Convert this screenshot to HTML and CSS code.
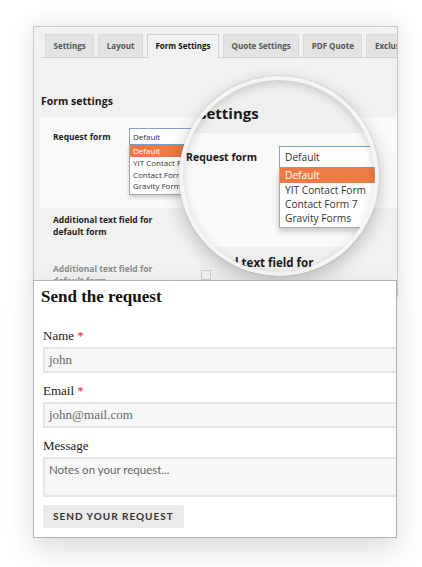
FILE: index.html
```html
<!DOCTYPE html>
<html>
<head>
<meta charset="utf-8">
<link rel="stylesheet" href="styles.css">
</head>
<body>
<div class="stage">
  <div class="admin">
    <div class="tabs">
      <div class="tab">Settings</div>
      <div class="tab">Layout</div>
      <div class="tab active">Form Settings</div>
      <div class="tab">Quote Settings</div>
      <div class="tab">PDF Quote</div>
      <div class="tab">Exclusions</div>
    </div>
    <h2 class="admin-title">Form settings</h2>
    <div class="row-light">
      <div class="label label-short">Request form</div>
      <div class="select-wrap">
        <div class="select">Default</div>
        <ul class="options">
          <li class="sel">Default</li>
          <li>YIT Contact Form</li>
          <li>Contact Form 7</li>
          <li>Gravity Forms</li>
        </ul>
      </div>
    </div>
    <div class="row">
      <div class="label label-long">Additional text field for default form</div>
    </div>
    <div class="row row-faded">
      <div class="label label-long">Additional text field for default form</div>
      <span class="checkbox"></span>
    </div>

    <div class="magnifier">
      <div class="lens-head"><h3 class="lens-title">Form settings</h3></div>
      <div class="lens-row">
        <div class="lens-label">Request form</div>
        <div class="lens-select-wrap">
          <div class="lens-select">Default</div>
          <ul class="lens-options">
            <li class="sel">Default</li>
            <li>YIT Contact Form</li>
            <li>Contact Form 7</li>
            <li>Gravity Forms</li>
          </ul>
        </div>
      </div>
      <div class="lens-row2">
        <div class="lens-label2">Additional text field for</div>
      </div>
    </div>
  </div>

  <div class="card">
    <h2 class="card-title">Send the request</h2>
    <div class="field first">
      <div class="field-label">Name <span class="req">*</span></div>
      <div class="input">john</div>
    </div>
    <div class="field">
      <div class="field-label">Email <span class="req">*</span></div>
      <div class="input">john@mail.com</div>
    </div>
    <div class="field">
      <div class="field-label">Message</div>
      <div class="textarea">Notes on your request...</div>
    </div>
    <div class="btn">SEND YOUR REQUEST</div>
  </div>
</div>
</body>
</html>
```
FILE: styles.css
```css
html, body {
  margin: 0;
  background: #fff;
}

.stage {
  width: 422px;
  height: 567px;
  box-sizing: border-box;
  padding: 26px 0 0 33px;
}

/* ---------- admin panel ---------- */
.admin {
  position: relative;
  width: 365px;
  height: 271px;
  box-sizing: border-box;
  border: 1px solid #c9c9c9;
  background: #f1f1f1;
  overflow: hidden;
  box-shadow: 0 0 22px rgba(0, 0, 0, 0.13);
  font-family: "Open Sans", Lato, sans-serif;
  color: #222;
}

.tabs {
  display: flex;
  align-items: flex-start;
  gap: 4px;
  height: 23px;
  margin: 7px 0 0 6px;
  padding-left: 5px;
  border-bottom: 1px solid #d2d2d2;
}

.tab {
  flex: none;
  height: 23px;
  box-sizing: border-box;
  padding: 0 7.5px;
  border: 1px solid #d9d9d9;
  border-bottom: none;
  background: #e3e3e3;
  font-size: 8px;
  font-weight: 700;
  line-height: 22px;
  color: #555;
  white-space: nowrap;
}

.tab.active {
  height: 24px;
  background: #f1f1f1;
  border-color: #cfcfcf;
  color: #111;
}

.admin-title {
  margin: 36px 0 0 7px;
  font-size: 10.5px;
  line-height: 14px;
  font-weight: 700;
  color: #1a1a1a;
}

.row-light {
  display: flex;
  align-items: flex-start;
  height: 91px;
  box-sizing: border-box;
  margin: 9px 0 0 6px;
  padding: 11px 0 0 13px;
  background: #f9f9f9;
}

.label {
  font-size: 8.5px;
  font-weight: 700;
  color: #222;
}

.label-short {
  flex: none;
  width: 76px;
  line-height: 17px;
}

.label-long {
  flex: none;
  width: 110px;
  line-height: 12px;
}

.select-wrap {
  position: relative;
}

.select {
  width: 120px;
  height: 17px;
  box-sizing: border-box;
  border: 1px solid #7ea3cf;
  background: #fff;
  padding-left: 3px;
  font-size: 8px;
  line-height: 15px;
  color: #333;
}

.options {
  position: absolute;
  top: 17px;
  left: 0;
  width: 120px;
  box-sizing: border-box;
  margin: 0;
  padding: 0 0 2px;
  list-style: none;
  background: #fff;
  border: 1px solid #a8a8a8;
  border-top: none;
  box-shadow: 0 2px 4px rgba(0, 0, 0, 0.2);
  font-size: 8px;
}

.options li {
  padding-left: 3px;
  line-height: 11.5px;
  color: #333;
  white-space: nowrap;
}

.options li.sel {
  line-height: 12px;
  background: #ef7a44;
  color: #fff;
}

.row {
  display: flex;
  align-items: flex-start;
  padding: 6px 0 0 19px;
}

.row-faded {
  padding-top: 25px;
}

.row-faded .label {
  color: #8c8c8c;
}

.checkbox {
  flex: none;
  width: 8px;
  height: 8px;
  margin: 7px 0 0 38px;
  border: 1px solid #cfcfcf;
  background: #f4f4f4;
}

/* ---------- magnifier ---------- */
.magnifier {
  position: absolute;
  left: 145px;
  top: 49px;
  width: 200px;
  height: 200px;
  box-sizing: border-box;
  border: 4px solid #f5f5f5;
  border-radius: 50%;
  overflow: hidden;
  background: #efefef;
  box-shadow: 0 6px 18px rgba(0, 0, 0, 0.22), 0 0 2px rgba(0, 0, 0, 0.18);
}

.magnifier::after {
  content: "";
  position: absolute;
  inset: 0;
  border-radius: 50%;
  box-shadow: inset 0 3px 10px rgba(0, 0, 0, 0.16);
}

.lens-head {
  height: 53px;
  box-sizing: border-box;
  padding-top: 25px;
  background: #efefef;
}

.lens-title {
  margin: 0 0 0 -27px;
  font-size: 15px;
  line-height: 16px;
  font-weight: 700;
  color: #1a1a1a;
  white-space: nowrap;
}

.lens-row {
  display: flex;
  align-items: flex-start;
  height: 114px;
  box-sizing: border-box;
  padding: 13px 0 0 3px;
  background: #f9f9f9;
}

.lens-label {
  flex: none;
  width: 93px;
  font-size: 10.5px;
  line-height: 22px;
  font-weight: 700;
  color: #1a1a1a;
  white-space: nowrap;
}

.lens-select-wrap {
  flex: none;
  position: relative;
}

.lens-select {
  width: 140px;
  height: 22px;
  box-sizing: border-box;
  border: 1px solid #7ea3cf;
  background: #fff;
  padding-left: 5px;
  font-size: 10.2px;
  line-height: 20px;
  color: #333;
}

.lens-options {
  position: absolute;
  top: 22px;
  left: 0;
  width: 140px;
  box-sizing: border-box;
  margin: 0;
  padding: 0 0 2px;
  list-style: none;
  background: #fff;
  border: 1px solid #a8a8a8;
  border-top: none;
  box-shadow: 0 3px 6px rgba(0, 0, 0, 0.22);
  font-size: 10.2px;
}

.lens-options li {
  padding-left: 5px;
  line-height: 14px;
  color: #333;
  white-space: nowrap;
}

.lens-options li.sel {
  line-height: 15px;
  background: #ef7a44;
  color: #fff;
}

.lens-row2 {
  padding-top: 8px;
  background: #efefef;
}

.lens-label2 {
  margin-left: -4px;
  font-size: 11.5px;
  line-height: 16px;
  font-weight: 700;
  color: #1a1a1a;
  white-space: nowrap;
}

/* ---------- request card ---------- */
.card {
  position: relative;
  width: 364px;
  margin-top: -17px;
  box-sizing: border-box;
  padding: 6px 0 9px 9px;
  border: 1px solid #b3b3b3;
  background: #fff;
  overflow: hidden;
  box-shadow: 0 12px 28px rgba(0, 0, 0, 0.14);
  font-family: "Liberation Serif", "Times New Roman", serif;
  color: #222;
}

.card-title {
  margin: 0 0 0 -2px;
  font-size: 17px;
  line-height: 20px;
  font-weight: 700;
  color: #111;
}

.field {
  margin-top: 10px;
}

.field.first {
  margin-top: 21px;
}

.field-label {
  margin-bottom: 3px;
  font-size: 13px;
  line-height: 16px;
  color: #1a1a1a;
}

.req {
  color: #e8262b;
}

.input {
  width: 380px;
  height: 26px;
  box-sizing: border-box;
  padding: 0 4px;
  border: 2px solid #e6e6e6;
  background: #f7f7f7;
  font-size: 13px;
  line-height: 22px;
  color: #666;
}

.textarea {
  width: 380px;
  height: 40px;
  box-sizing: border-box;
  padding: 4px 4px 0;
  border: 2px solid #e6e6e6;
  background: #f7f7f7;
  font-family: Lato, "Open Sans", sans-serif;
  font-size: 11.5px;
  line-height: 14px;
  color: #666;
}

.btn {
  display: inline-block;
  margin-top: 8px;
  height: 23px;
  padding: 0 10px;
  border-radius: 2px;
  background: #ebe9eb;
  font-family: Lato, "Open Sans", sans-serif;
  font-size: 10px;
  font-weight: 700;
  letter-spacing: 1px;
  line-height: 23px;
  color: #333;
}
```
